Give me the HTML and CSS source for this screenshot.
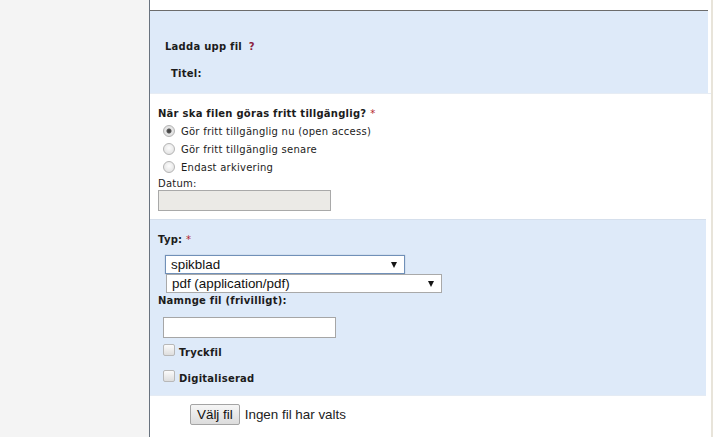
FILE: index.html
```html
<!DOCTYPE html>
<html lang="sv">
<head>
    <meta charset="UTF-8">
    <title>Ladda upp fil</title>
    <link rel="stylesheet" href="styles.css">
</head>
<body>
    <div class="page">
        <div class="sidebar"></div>
        <div class="main">
            <div class="top-gap"></div>

            <!-- Upload header -->
            <div class="section blue upload">
                <div class="heading">Ladda upp fil <span class="help">?</span></div>
                <div class="title-label">Titel:</div>
            </div>

            <!-- Access -->
            <div class="section access">
                <div class="heading">När ska filen göras fritt tillgänglig? <span class="req">*</span></div>
                <label class="radio-row"><input type="radio" name="access" checked> Gör fritt tillgänglig nu (open access)</label>
                <label class="radio-row"><input type="radio" name="access"> Gör fritt tillgänglig senare</label>
                <label class="radio-row"><input type="radio" name="access"> Endast arkivering</label>
                <div class="small-label">Datum:</div>
                <input type="text" class="date-input" disabled>
            </div>

            <!-- Type -->
            <div class="section blue type">
                <div class="heading">Typ: <span class="req">*</span></div>
                <div class="select select-type">
                    <span>spikblad</span>
                    <span class="arrow"></span>
                </div>
                <div class="select select-mime">
                    <span>pdf (application/pdf)</span>
                    <span class="arrow"></span>
                </div>
                <div class="heading name-label">Namnge fil (frivilligt):</div>
                <input type="text" class="name-input">
                <label class="check-row"><input type="checkbox"> Tryckfil</label>
                <label class="check-row"><input type="checkbox"> Digitaliserad</label>
            </div>

            <!-- File -->
            <div class="section file">
                <button class="file-btn">Välj fil</button>
                <span class="file-none">Ingen fil har valts</span>
            </div>
        </div>
    </div>
</body>
</html>
```

FILE: styles.css
```css
body {
    margin: 0;
    font-family: "DejaVu Sans", Verdana, sans-serif;
    font-size: 10px;
    letter-spacing: 0.25px;
    color: #1c1c1c;
    background: #fff;
}
.page {
    display: flex;
    height: 437px;
    overflow: hidden;
}
.sidebar {
    width: 149px;
    background: #f4f4f4;
}
.main {
    width: 561px;
    border-left: 1px solid #68727e;
    border-right: 2px solid #e8e4da;
    background: #fff;
}
.top-gap {
    height: 10px;
}
.section {
    box-sizing: border-box;
}
.blue {
    background: #deeaf9;
    margin-right: 5px;
}
.heading {
    font-weight: bold;
    line-height: 14px;
}
.req {
    color: #b3262e;
    font-weight: normal;
}
.help {
    color: #8c1d3e;
    margin-left: 3px;
}

/* upload header */
.upload {
    height: 83px;
    border-top: 1px solid #6c6c6c;
    padding: 29px 0 0 15px;
    margin-right: 3px;
}
.title-label {
    font-weight: bold;
    line-height: 14px;
    margin: 13px 0 0 6px;
}

/* access */
.access {
    height: 126px;
    padding: 13px 0 0 8px;
    border-top: 1px solid #e6ecf4;
}
.radio-row {
    display: flex;
    align-items: center;
    height: 18px;
    padding-left: 5px;
}
.radio-row input {
    appearance: none;
    width: 12px;
    height: 12px;
    margin: 0 6px 0 0;
    border: 1px solid #b4b4b4;
    border-radius: 50%;
    background: radial-gradient(circle at 50% 40%, #fdfdfd, #dcdcdc);
    box-sizing: border-box;
}
.radio-row input:checked {
    background: radial-gradient(circle, #3c3c3c 0, #555 2px, #e8e8e8 3px, #d8d8d8);
}
.radio-row:first-of-type {
    margin-top: 1px;
}
.small-label {
    line-height: 12px;
    margin-top: 2px;
}
.date-input {
    display: block;
    width: 173px;
    height: 21px;
    box-sizing: border-box;
    border: 1px solid #a9a9a9;
    background: #ebeae6;
    margin: 0;
}

/* type */
.type {
    height: 177px;
    padding: 13px 0 0 8px;
    border-top: 1px solid #d5dfec;
    border-bottom: 1px solid #e4ebf4;
}
.select {
    display: flex;
    justify-content: space-between;
    align-items: center;
    box-sizing: border-box;
    height: 19px;
    padding: 0 7px 0 5px;
    background: #fff;
    font-family: "Liberation Sans", Arial, sans-serif;
    font-size: 13.4px;
    letter-spacing: 0;
    color: #111;
}
.select .arrow {
    width: 0;
    height: 0;
    border-left: 3.5px solid transparent;
    border-right: 3.5px solid transparent;
    border-top: 6px solid #151515;
}
.select-type {
    width: 240px;
    margin: 8px 0 0 7px;
    border: 1px solid #7090b8;
    box-shadow: 0 0 1px #9ab;
}
.select-mime {
    width: 276px;
    margin: 0 0 0 8px;
    border: 1px solid #a9a9a9;
}
.name-label {
    margin-top: 1px;
}
.name-input {
    display: block;
    width: 173px;
    height: 21px;
    box-sizing: border-box;
    border: 1px solid #a6a6a6;
    margin: 9px 0 0 5px;
}
.check-row {
    display: flex;
    align-items: center;
    font-weight: bold;
    height: 14px;
    margin-top: 7px;
    padding-left: 5px;
}
.check-row + .check-row {
    margin-top: 12px;
}
.check-row input {
    appearance: none;
    width: 12px;
    height: 12px;
    margin: -4px 4px 0 0;
    border: 1px solid #b8b8b8;
    border-radius: 2px;
    background: linear-gradient(#fbfbfb, #dedede);
    box-sizing: border-box;
}

/* file */
.file {
    padding: 8px 0 0 40px;
    display: flex;
    align-items: center;
    font-family: "Liberation Sans", Arial, sans-serif;
    font-size: 13.4px;
    letter-spacing: 0;
}
.file-btn {
    height: 21px;
    padding: 0 6px;
    font-family: "Liberation Sans", Arial, sans-serif;
    font-size: 13.4px;
    color: #111;
    border: 1px solid #a4a4a4;
    border-radius: 2px;
    background: linear-gradient(#f6f6f6, #dcdcdc);
    margin-right: 5px;
}
.file-none {
    color: #222;
}
```
